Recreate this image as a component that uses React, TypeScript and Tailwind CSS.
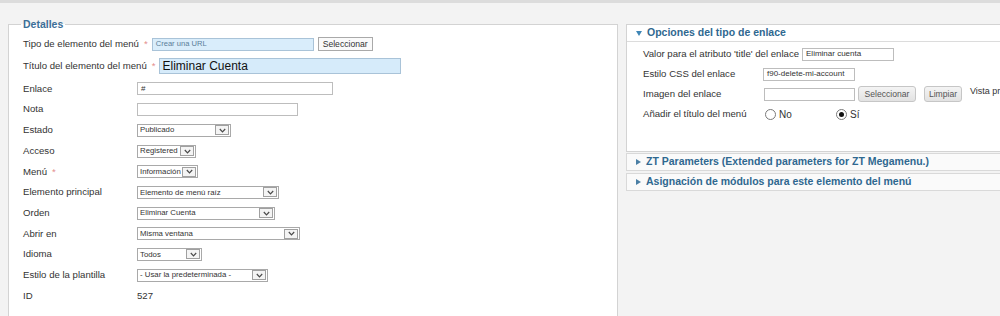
import type { ReactNode } from "react";

const font = "font-['Liberation_Sans',Arial,sans-serif]";

function Chevron() {
  return (
    <span className="mr-[1px] flex h-[10px] w-[14px] shrink-0 items-center justify-center border border-[#a0a0a0] bg-[#f4f4f4]">
      <svg width="7" height="5" viewBox="0 0 7 5">
        <path d="M0.8 1 L3.5 3.8 L6.2 1" fill="none" stroke="#4a4a4a" strokeWidth="1.2" />
      </svg>
    </span>
  );
}

function Select({ value, className }: { value: string; className: string }) {
  return (
    <div className={`flex h-[13px] items-center border border-[#a9a9a9] bg-white ${className}`}>
      <span className="flex-1 overflow-hidden whitespace-nowrap pl-[2px] text-[7.8px] leading-none text-[#333]">{value}</span>
      <Chevron />
    </div>
  );
}

function Field({ value = "", className }: { value?: string; className: string }) {
  return (
    <div className={`flex h-[13px] items-center border border-[#bdbdbd] bg-white pl-[3px] text-[8px] leading-none text-[#333] ${className}`}>
      {value}
    </div>
  );
}

function Row({ label, star, children }: { label: string; star?: boolean; children: ReactNode }) {
  return (
    <div className="flex h-[20.7px] items-center">
      <div className="w-[114px] shrink-0 text-[9.6px] text-[#333]">
        {label}
        {star && <span className="ml-[5px] text-[#e38c8c]">*</span>}
      </div>
      {children}
    </div>
  );
}

function Radio({ checked }: { checked?: boolean }) {
  return (
    <span className="flex h-[11px] w-[11px] items-center justify-center rounded-full border border-[#7a7a7a] bg-white">
      {checked && <span className="h-[5px] w-[5px] rounded-full bg-[#111]" />}
    </span>
  );
}

function GrayButton({ children, className }: { children: ReactNode; className: string }) {
  return (
    <div className={`flex h-[16px] items-center justify-center rounded-[3px] border border-[#c6c6c6] bg-gradient-to-b from-[#f4f4f4] to-[#e2e2e2] text-[8.6px] text-[#555] ${className}`}>
      {children}
    </div>
  );
}

function Bar({ title, open }: { title: string; open?: boolean }) {
  return (
    <div className="flex h-[16px] items-center gap-[5px] pl-[9px] text-[10.5px] font-bold text-[#2f6890]">
      {open ? (
        <svg width="6" height="5" viewBox="0 0 6 5">
          <polygon points="0,0 6,0 3,5" fill="#3f86b6" />
        </svg>
      ) : (
        <svg width="5" height="6" viewBox="0 0 5 6">
          <polygon points="0,0 5,3 0,6" fill="#4b7fa5" />
        </svg>
      )}
      {title}
    </div>
  );
}

export default function App() {
  return (
    <div className={`h-[316px] w-[1000px] overflow-hidden border-t-[3px] border-[#dcdcdc] bg-[#f3f3f3] ${font}`}>
      <div className="flex items-start gap-[8px] pl-[8px] pt-[15px]">
        {/* Detalles */}
        <fieldset className="h-[320px] w-[610px] shrink-0 border border-[#d3d3d3] bg-white pl-[14px]">
          <legend className="-ml-[2px] px-[2px] text-[10.5px] leading-[13px] font-bold text-[#3c6f98]">
            Detalles
          </legend>
          <div className="mt-[3px] flex h-[20px] items-center text-[9.6px] text-[#333]">
            Tipo de elemento del menú
            <span className="ml-[5px] text-[#e38c8c]">*</span>
            <div className="ml-[4px] flex h-[13px] w-[162px] items-center border border-[#a9c3d8] bg-[#d9edfb] pl-[3px] text-[7.6px] text-[#5a7d99]">
              Crear una URL
            </div>
            <div className="ml-[4px] flex h-[14px] w-[55px] items-center justify-center border border-[#a9a9a9] bg-[#fafafa] text-[8.6px] text-[#333]">
              Seleccionar
            </div>
          </div>
          <div className="flex h-[24.65px] items-center text-[9.6px] text-[#333]">
            Título del elemento del menú
            <span className="ml-[5px] text-[#e38c8c]">*</span>
            <div className="ml-[4px] flex h-[16px] w-[242px] items-center border border-[#a9c3d8] bg-[#d6ebfa] pl-[2px] text-[12px] text-[#111]">
              Eliminar Cuenta
            </div>
          </div>
          <Row label="Enlace">
            <Field value="#" className="w-[196px]" />
          </Row>
          <Row label="Nota">
            <Field className="w-[161px]" />
          </Row>
          <Row label="Estado">
            <Select value="Publicado" className="w-[94px]" />
          </Row>
          <Row label="Acceso">
            <Select value="Registered" className="w-[59px]" />
          </Row>
          <Row label="Menú" star>
            <Select value="Información" className="w-[61px]" />
          </Row>
          <Row label="Elemento principal">
            <Select value="Elemento de menú raíz" className="w-[142px]" />
          </Row>
          <Row label="Orden">
            <Select value="Eliminar Cuenta" className="w-[138px]" />
          </Row>
          <Row label="Abrir en">
            <Select value="Misma ventana" className="w-[163px]" />
          </Row>
          <Row label="Idioma">
            <Select value="Todos" className="w-[65px]" />
          </Row>
          <Row label="Estilo de la plantilla">
            <Select value="- Usar la predeterminada -" className="w-[131px]" />
          </Row>
          <Row label="ID">
            <span className="text-[9.6px] text-[#333]">527</span>
          </Row>
        </fieldset>

        {/* Opciones */}
        <div className="mt-[6px] w-[400px] shrink-0">
          <div className="border border-[#d3d3d3] bg-white">
            <div className="border-b border-[#dcdcdc]">
              <Bar title="Opciones del tipo de enlace" open />
            </div>
            <div className="h-[109px] pl-[16px] pt-[2px] text-[9.6px] text-[#333]">
              <div className="flex h-[20px] items-center">
                Valor para el atributo &#39;title&#39; del enlace
                <Field value="Eliminar cuenta" className="ml-[3px] w-[92px]" />
              </div>
              <div className="flex h-[20px] items-center">
                <span className="w-[120px] shrink-0">Estilo CSS del enlace</span>
                <Field value="f90-delete-mi-account" className="w-[92px]" />
              </div>
              <div className="flex h-[20px] items-center">
                <span className="w-[121px] shrink-0">Imagen del enlace</span>
                <Field className="w-[91px]" />
                <GrayButton className="ml-[3px] w-[58px]">Seleccionar</GrayButton>
                <GrayButton className="ml-[8px] w-[38px]">Limpiar</GrayButton>
                <span className="mb-[5px] ml-[8px] whitespace-nowrap text-[9px]">Vista previa</span>
              </div>
              <div className="flex h-[20px] items-center text-[9.6px]">
                <span className="w-[122px] shrink-0">Añadir el título del menú</span>
                <Radio />
                <span className="ml-[3px] w-[57px] text-[10px]">No</span>
                <Radio checked />
                <span className="ml-[3px] text-[10px]">Sí</span>
              </div>
            </div>
          </div>
          <div className="mt-[1px] border border-[#d9d9d9] bg-[#fafafa]">
            <Bar title="ZT Parameters (Extended parameters for ZT Megamenu.)" />
          </div>
          <div className="mt-[2px] border border-[#d9d9d9] bg-[#fafafa]">
            <Bar title="Asignación de módulos para este elemento del menú" />
          </div>
        </div>
      </div>
    </div>
  );
}
